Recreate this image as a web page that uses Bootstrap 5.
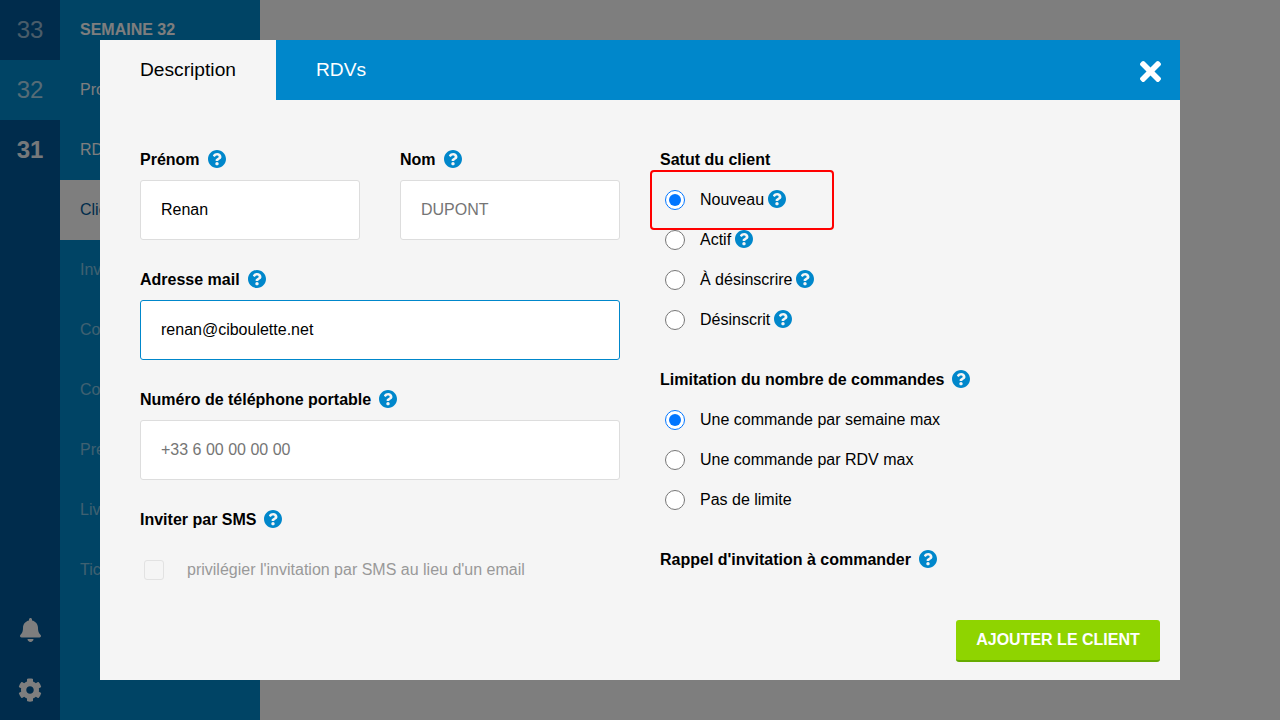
<!DOCTYPE html>
<html lang="fr">
<head>
<meta charset="utf-8">
<title>Client</title>
<link href="https://cdn.jsdelivr.net/npm/bootstrap@5.3.0/dist/css/bootstrap.min.css" rel="stylesheet">
<style>
html,body{height:100%;margin:0;overflow:hidden;font-family:"Liberation Sans",Arial,sans-serif;font-size:16px;color:#000;background:#fff}
.app-shell{width:1280px;height:720px}
.rail{width:60px;background:#005a9a;color:#fff}
.rail-num{height:60px;font-size:24px;line-height:60px;text-align:center;color:rgba(255,255,255,.6)}
.rail-num.cur{background:#008acc;color:rgba(255,255,255,.7)}
.rail-num.strong{font-weight:700;color:rgba(255,255,255,.95)}
.rail-ico{height:60px}
.rail-ico svg{fill:#fff}
.side{width:200px;background:#008acc;color:#fff}
.side-item{height:60px;line-height:60px;padding-left:20px;white-space:nowrap}
.side-item.head{font-weight:700}
.side-item.act{background:#fff;color:#005a9a}
.side-item.dim{color:rgba(255,255,255,.5)}
.veil{position:absolute;inset:0;background:rgba(0,0,0,.505)}
.dialog{position:absolute;left:100px;top:40px;width:1080px;height:640px;background:#f5f5f5;overflow:hidden;opacity:.999}
.tabbar{height:60px;background:#0087cb}
.tab-btn{padding:0 40px;line-height:60px;font-size:19.2px;color:#fff}
.tab-btn.on{background:#f5f5f5;color:#000}
.x-btn{width:60px;height:60px;padding-top:2px}
.x-btn svg{fill:#fff;width:21px;height:31px}
.dlg-body{height:520px;padding:40px 40px 0;gap:40px}
.col-l{width:480px}
.fld-label{height:40px;font-weight:700;gap:8px;margin:0}
.qm{width:18px;height:18px;fill:#0087cb;flex:none;margin-top:-2px}
.fld-input{height:60px;width:100%;border:1px solid #ddd;border-radius:3px;background:#fff;padding:0 20px;font-size:16px;color:#000;outline:0;display:block;font-family:inherit}
.fld-input::placeholder{color:#757575;opacity:1}
.fld-input.foc{border-color:#0087cb}
.fld-gap{margin-bottom:20px}
.half{width:220px}
.sms-row{height:60px;padding-left:4px;gap:23px;color:#999}
.sms-box{width:20px;height:20px;border:1px solid #e2e2e2;border-radius:3px;background:#f5f5f5}
.radio-row{height:40px;padding-left:5px;gap:15px}
.radio-row input{width:20px;height:20px;margin:0;flex:none}
.radio-txt{gap:4px}
.hl-box{position:absolute;left:550px;top:130px;width:184px;height:60px;border:2px solid #f00;border-radius:4px;pointer-events:none}
.dlg-foot{height:60px;padding-right:20px}
.go-btn{height:42px;width:204px;background:#8fd400;border:0;border-bottom:2px solid #66ab00;border-radius:3px;color:#fff;font-weight:700;font-size:16px;padding:0;font-family:inherit}
</style>
</head>
<body>
<svg width="0" height="0" class="position-absolute">
<symbol id="i-q" viewBox="8 8 496 496"><path d="M504 256c0 136.997-111.043 248-248 248S8 392.997 8 256C8 119.083 119.043 8 256 8s248 111.083 248 248zM262.655 90c-54.497 0-89.255 22.957-116.549 63.758-3.536 5.286-2.353 12.415 2.715 16.258l34.699 26.31c5.205 3.947 12.621 3.008 16.665-2.122 17.864-22.658 30.113-35.797 57.303-35.797 20.429 0 45.698 13.148 45.698 32.958 0 14.976-12.363 22.667-32.534 33.976C247.128 238.528 216 254.941 216 296v4c0 6.627 5.373 12 12 12h56c6.627 0 12-5.373 12-12v-1.333c0-28.462 83.186-29.647 83.186-106.667 0-58.002-60.165-102-116.531-102zM256 338c-25.365 0-46 20.635-46 46 0 25.364 20.635 46 46 46s46-20.636 46-46c0-25.365-20.635-46-46-46z"/></symbol>
</svg>
<div class="app-shell d-flex">
  <div class="rail d-flex flex-column">
    <div class="rail-num">33</div>
    <div class="rail-num cur">32</div>
    <div class="rail-num strong">31</div>
    <div class="rail-ico mt-auto d-flex align-items-center justify-content-center"><svg width="21" height="24" viewBox="0 0 448 512"><path d="M224 512c35.32 0 63.97-28.65 63.97-64H160.03c0 35.35 28.65 64 63.97 64zm215.39-149.71c-19.32-20.76-55.47-51.99-55.47-154.29 0-77.7-54.48-139.9-127.94-155.16V32c0-17.67-14.32-32-31.98-32s-31.98 14.33-31.98 32v20.84C118.56 68.1 64.08 130.3 64.08 208c0 102.3-36.15 133.53-55.47 154.29-6 6.45-8.66 14.16-8.61 21.71.11 16.4 12.98 32 32.1 32h383.8c19.12 0 32-15.6 32.1-32 .05-7.55-2.61-15.27-8.61-21.71z"/></svg></div>
    <div class="rail-ico d-flex align-items-center justify-content-center"><svg width="24" height="24" viewBox="0 0 512 512"><path d="M487.4 315.7l-42.6-24.6c4.3-23.2 4.3-47 0-70.2l42.6-24.6c4.9-2.8 7.1-8.6 5.5-14-11.1-35.6-30-67.8-54.7-94.6-3.8-4.1-10-5.1-14.8-2.3L380.8 110c-17.9-15.4-38.5-27.3-60.8-35.1V25.8c0-5.6-3.9-10.5-9.4-11.7-36.7-8.2-74.3-7.8-109.2 0-5.5 1.2-9.4 6.1-9.4 11.7V75c-22.2 7.9-42.8 19.8-60.8 35.1L88.7 85.5c-4.9-2.8-11-1.9-14.8 2.3-24.7 26.7-43.6 58.9-54.7 94.6-1.7 5.4.6 11.2 5.5 14L67.3 221c-4.3 23.2-4.3 47 0 70.2l-42.6 24.6c-4.9 2.8-7.1 8.6-5.5 14 11.1 35.6 30 67.8 54.7 94.6 3.8 4.1 10 5.1 14.8 2.3l42.6-24.6c17.9 15.4 38.5 27.3 60.8 35.1v49.2c0 5.6 3.9 10.5 9.4 11.7 36.7 8.2 74.3 7.8 109.2 0 5.5-1.2 9.4-6.1 9.4-11.7v-49.2c22.2-7.9 42.8-19.8 60.8-35.1l42.6 24.6c4.9 2.8 11 1.9 14.8-2.3 24.7-26.7 43.6-58.9 54.7-94.6 1.5-5.5-.7-11.3-5.6-14.1zM256 336c-44.1 0-80-35.9-80-80s35.9-80 80-80 80 35.9 80 80-35.9 80-80 80z"/></svg></div>
  </div>
  <div class="side">
    <div class="side-item head">SEMAINE 32</div>
    <div class="side-item">Produits</div>
    <div class="side-item">RDVs</div>
    <div class="side-item act">Clients</div>
    <div class="side-item dim">Invitations</div>
    <div class="side-item dim">Commandes</div>
    <div class="side-item dim">Comptes</div>
    <div class="side-item dim">Préparation</div>
    <div class="side-item dim">Livraison</div>
    <div class="side-item dim">Tickets</div>
  </div>
</div>
<div class="veil"></div>
<div class="dialog d-flex flex-column">
  <div class="tabbar d-flex">
    <div class="tab-btn on">Description</div>
    <div class="tab-btn">RDVs</div>
    <div class="x-btn ms-auto d-flex align-items-center justify-content-center"><svg viewBox="0 0 352 512"><path d="M242.72 256l100.07-100.07c12.28-12.28 12.28-32.19 0-44.48l-22.24-22.24c-12.28-12.28-32.19-12.28-44.48 0L176 189.28 75.93 89.21c-12.28-12.28-32.19-12.28-44.48 0L9.21 111.45c-12.28 12.28-12.28 32.19 0 44.48L109.28 256 9.21 356.07c-12.28 12.28-12.28 32.19 0 44.48l22.24 22.24c12.28 12.28 32.2 12.28 44.48 0L176 322.72l100.07 100.07c12.28 12.28 32.2 12.28 44.48 0l22.24-22.24c12.28-12.28 12.28-32.19 0-44.48L242.72 256z"/></svg></div>
  </div>
  <div class="dlg-body d-flex">
    <div class="col-l">
      <div class="d-flex justify-content-between fld-gap">
        <div class="half">
          <label class="fld-label d-flex align-items-center">Prénom <svg class="qm"><use href="#i-q"/></svg></label>
          <input class="fld-input" type="text" value="Renan">
        </div>
        <div class="half">
          <label class="fld-label d-flex align-items-center">Nom <svg class="qm"><use href="#i-q"/></svg></label>
          <input class="fld-input" type="text" placeholder="DUPONT">
        </div>
      </div>
      <div class="fld-gap">
        <label class="fld-label d-flex align-items-center">Adresse mail <svg class="qm"><use href="#i-q"/></svg></label>
        <input class="fld-input foc" type="text" value="renan@ciboulette.net">
      </div>
      <div class="fld-gap">
        <label class="fld-label d-flex align-items-center">Numéro de téléphone portable <svg class="qm"><use href="#i-q"/></svg></label>
        <input class="fld-input" type="text" placeholder="+33 6 00 00 00 00">
      </div>
      <div>
        <label class="fld-label d-flex align-items-center">Inviter par SMS <svg class="qm"><use href="#i-q"/></svg></label>
        <div class="sms-row d-flex align-items-center"><span class="sms-box"></span><span>privilégier l'invitation par SMS au lieu d'un email</span></div>
      </div>
    </div>
    <div class="flex-grow-1">
      <label class="fld-label d-flex align-items-center">Satut du client</label>
      <div class="radio-row d-flex align-items-center"><input type="radio" name="st" checked><span class="radio-txt d-flex align-items-center">Nouveau <svg class="qm"><use href="#i-q"/></svg></span></div>
      <div class="radio-row d-flex align-items-center"><input type="radio" name="st"><span class="radio-txt d-flex align-items-center">Actif <svg class="qm"><use href="#i-q"/></svg></span></div>
      <div class="radio-row d-flex align-items-center"><input type="radio" name="st"><span class="radio-txt d-flex align-items-center">À désinscrire <svg class="qm"><use href="#i-q"/></svg></span></div>
      <div class="radio-row d-flex align-items-center fld-gap"><input type="radio" name="st"><span class="radio-txt d-flex align-items-center">Désinscrit <svg class="qm"><use href="#i-q"/></svg></span></div>
      <label class="fld-label d-flex align-items-center">Limitation du nombre de commandes <svg class="qm"><use href="#i-q"/></svg></label>
      <div class="radio-row d-flex align-items-center"><input type="radio" name="lim" checked><span>Une commande par semaine max</span></div>
      <div class="radio-row d-flex align-items-center"><input type="radio" name="lim"><span>Une commande par RDV max</span></div>
      <div class="radio-row d-flex align-items-center fld-gap"><input type="radio" name="lim"><span>Pas de limite</span></div>
      <label class="fld-label d-flex align-items-center">Rappel d'invitation à commander <svg class="qm"><use href="#i-q"/></svg></label>
    </div>
  </div>
  <div class="dlg-foot d-flex justify-content-end"><button class="go-btn" type="button">AJOUTER LE CLIENT</button></div>
  <div class="hl-box"></div>
</div>
<script src="https://cdn.jsdelivr.net/npm/bootstrap@5.3.0/dist/js/bootstrap.bundle.min.js"></script>
</body>
</html>
